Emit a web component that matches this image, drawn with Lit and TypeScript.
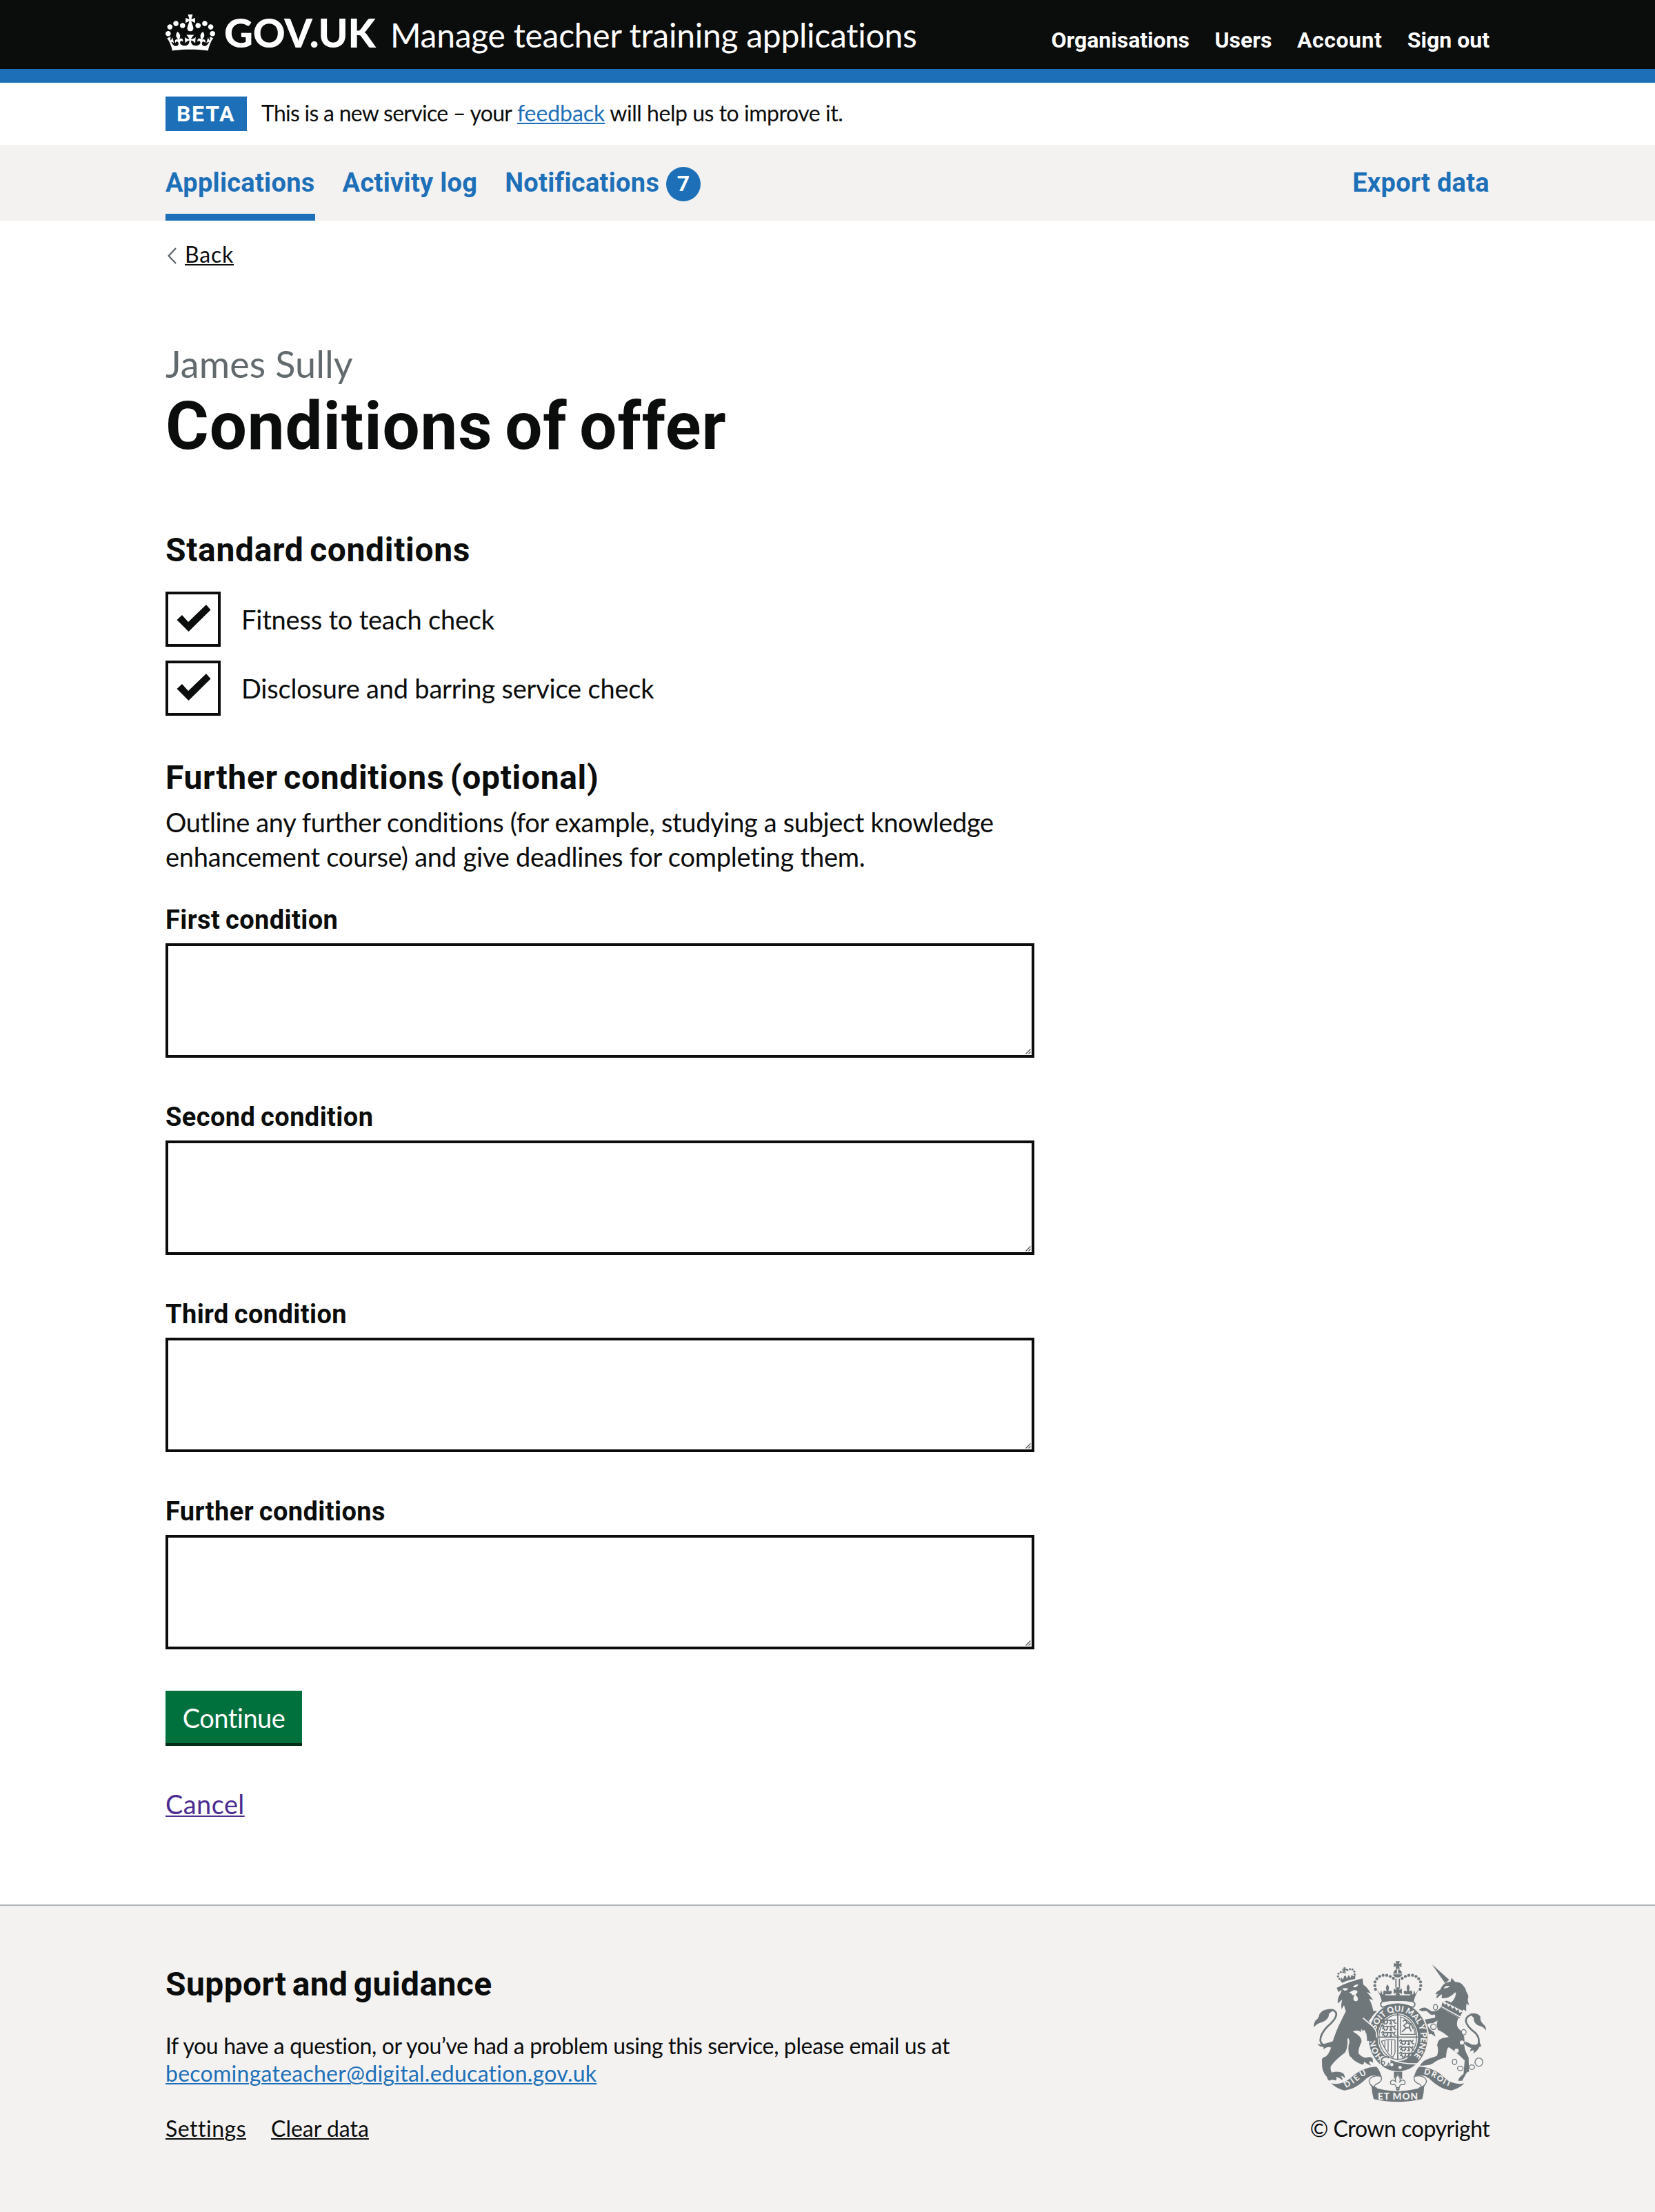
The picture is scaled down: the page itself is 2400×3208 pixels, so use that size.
import { LitElement, html, svg, css } from "lit";
import { customElement, property } from "lit/decorators.js";

const NAV_LINKS = [
  { text: "Organisations", cls: "organisations" },
  { text: "Users", cls: "users" },
  { text: "Account", cls: "account" },
  { text: "Sign out", cls: "sign-out" },
];

const STANDARD_CONDITIONS = ["Fitness to teach check", "Disclosure and barring service check"];

const FURTHER_CONDITIONS = ["First condition", "Second condition", "Third condition", "Further conditions"];

@customElement("gov-crown")
class GovCrown extends LitElement {
  static styles = css`
    :host { display: block; width: 72px; height: 53px; }
    svg { display: block; width: 72px; height: 53px; fill: #fff; }
  `;
  render() {
    return html`<svg viewBox="0 0 132 97" aria-hidden="true"><path fill-rule="evenodd" d="M25 30.2c3.5 1.5 7.7-.2 9.1-3.7 1.5-3.6-.2-7.8-3.9-9.2-3.6-1.4-7.6.3-9.1 3.9-1.4 3.5.3 7.5 3.9 9zM9 39.5c3.6 1.5 7.8-.2 9.2-3.7 1.5-3.6-.2-7.8-3.9-9.1-3.6-1.5-7.6.2-9.1 3.8-1.4 3.5.3 7.5 3.8 9zM4.4 57.2c3.5 1.5 7.7-.2 9.1-3.8 1.5-3.6-.2-7.7-3.9-9.1-3.5-1.5-7.6.3-9.1 3.8-1.4 3.5.3 7.6 3.9 9.1zm38.3-21.4c3.5 1.5 7.7-.2 9.1-3.8 1.5-3.6-.2-7.7-3.9-9.1-3.6-1.5-7.6.3-9.1 3.8-1.3 3.6.4 7.7 3.9 9.1zm64.4-5.6c-3.6 1.5-7.8-.2-9.1-3.7-1.5-3.6.2-7.8 3.8-9.2 3.6-1.4 7.7.3 9.2 3.9 1.3 3.5-.4 7.5-3.9 9zm15.9 9.3c-3.6 1.5-7.7-.2-9.1-3.7-1.5-3.6.2-7.8 3.7-9.1 3.6-1.5 7.7.2 9.2 3.8 1.5 3.5-.3 7.5-3.8 9zm4.7 17.7c-3.6 1.5-7.8-.2-9.2-3.8-1.5-3.6.2-7.7 3.9-9.1 3.6-1.5 7.7.3 9.2 3.8 1.3 3.5-.4 7.6-3.9 9.1zM89.3 35.8c-3.6 1.5-7.8-.2-9.2-3.8-1.4-3.6.2-7.7 3.9-9.1 3.6-1.5 7.7.3 9.2 3.8 1.4 3.6-.3 7.7-3.9 9.1zM69.7 17.7l8.9 4.7V9.3l-8.9 2.8c-.2-.3-.5-.6-.9-.9L72.4 0H59.6l3.5 11.2c-.3.3-.6.5-.9.9l-8.8-2.8v13.1l8.8-4.7c.3.3.6.7.9.9l-5 15.4v.1c-.2.8-.4 1.6-.4 2.4 0 4.1 3.1 7.5 7 8.1h.2c.3 0 .7.1 1 .1.4 0 .7 0 1-.1h.2c4-.6 7.1-4.1 7.1-8.1 0-.8-.1-1.7-.4-2.4V34l-5.1-15.4c.4-.2.7-.6 1-.9zM66 92.8c16.9 0 32.8 1.1 47.1 3.2 4-16.9 8.9-26.7 14-33.5l-9.6-3.4c1 4.9 1.1 7.2 0 10.2-1.5-1.4-3-4.3-4.2-8.7L108.6 76c2.8-2 5-3.2 7.5-3.3-4.4 9.4-10 11.9-13.6 11.2-4.3-.8-6.3-4.6-5.6-7.9 1-4.7 5.7-5.9 8-.5 4.3-8.7-3-11.4-7.6-8.8 7.1-7.2 7.9-13.5 2.1-21.1-8 6.1-8.1 12.3-4.5 20.8-4.7-5.4-12.1-2.5-9.5 6.2 3.4-5.2 7.9-2 7.2 3.1-.6 4.3-6.4 7.8-13.5 7.2-10.3-.9-10.9-8-11.2-13.8 2.5-.5 7.1 1.8 11 7.3L80.2 60c-4.1 4.4-8 5.3-12.3 5.4 1.4-4.4 8-11.6 8-11.6H55.5s6.4 7.2 7.9 11.6c-4.2-.1-8-1-12.3-5.4l1.4 16.4c3.9-5.5 8.5-7.7 10.9-7.3-.3 5.8-.9 12.8-11.1 13.8-7.2.6-12.9-2.9-13.5-7.2-.7-5 3.8-8.3 7.1-3.1 2.7-8.7-4.6-11.6-9.4-6.2 3.7-8.5 3.6-14.7-4.6-20.8-5.8 7.6-5 13.9 2.2 21.1-4.7-2.6-11.9.1-7.7 8.8 2.3-5.5 7.1-4.2 8.1.5.7 3.3-1.3 7.1-5.7 7.9-3.5.7-9-1.8-13.5-11.2 2.5.1 4.7 1.3 7.5 3.3l-4.7-15.4c-1.2 4.4-2.7 7.2-4.3 8.7-1.1-3-.9-5.3 0-10.2l-9.5 3.4c5 6.9 9.9 16.7 14 33.5 14.8-2.1 30.8-3.2 47.7-3.2z"/></svg>`;
  }
}

/** Pearls of the left arch of the main crown; the right arch mirrors them about x = 438. */
const PEARLS = [
  [341, 194], [338, 178], [339, 162], [347, 148], [359, 138], [374, 133], [390, 133], [405, 138], [419, 146],
];

const LION_PEARLS = [
  [184, 148], [178, 138], [180, 126], [190, 119], [201, 119], [219, 110], [230, 106], [241, 108], [249, 117], [250, 129],
];

const CHAIN = [
  [602, 272, 9, 12], [593, 357, 12, 12], [725, 381, 10, 12], [685, 510, 10, 12],
  [710, 538, 12, 10], [760, 533, 12, 10], [791, 511, 17, 18],
];

@customElement("royal-arms")
class RoyalArms extends LitElement {
  static styles = css`
    :host { display: block; width: 250px; height: 205px; }
    svg { display: block; width: 250px; height: 205px; overflow: visible; }
    .ink { fill: #6f777b; stroke: none; }
    .paper { fill: #f3f2f1; stroke: none; }
    .line { fill: none; stroke: #6f777b; stroke-width: 4; stroke-linecap: round; stroke-linejoin: round; }
    .medium { stroke-width: 5.5; }
    .heavy { stroke-width: 8; }
    .cut { fill: none; stroke: #f3f2f1; stroke-width: 5; stroke-linecap: round; stroke-linejoin: round; }
    .motto { fill: #f3f2f1; font-family: Lato, sans-serif; font-weight: 900; }
  `;

  /** Half of the ribbon; used as drawn on the left and mirrored on the right. */
  private ribbonHalf() {
    return svg`
      <path class="ink" d="M148 603Q195 614 235 578Q282 534 345 531Q360 546 367 574Q332 560 302 582Q252 631 205 634Q174 628 148 603Z"/>
      <path class="line" d="M366 573Q322 564 313 592Q314 614 346 624M366 574Q373 596 345 606Q334 612 336 622"/>
      <path class="ink" d="M312 596Q318 612 345 622L338 634Q322 622 312 596Z"/>
    `;
  }

  private crownHalf() {
    return svg`
      ${PEARLS.map(([x, y]) => svg`<circle class="ink" cx=${x} cy=${y} r="6.5"/>`)}
      <path class="ink" d="M393 172Q402 184 399 192Q396 199 399 204Q408 196 412 204Q414 212 406 216H380Q372 210 376 202Q382 196 388 204Q390 198 387 192Q384 184 393 172Z"/>
      <path class="ink" d="M344 192L362 214L366 198L372 218L380 208L384 220H438V246Q395 246 368 246Q364 220 344 192Z"/>
    `;
  }

  /** Three walking lions, as in the first and fourth quarters. */
  private passantLions() {
    return svg`${[0, 27, 54].map(
      (y) => svg`<path class="line medium" transform=${`translate(0 ${y})`} d="M0 4L6 0L10 6L24 4Q34 6 44 3L54 8L58 2M10 6L4 14L12 16L14 22M24 6L26 14L20 20M38 6L42 14L36 20L44 21M52 8L56 16L62 18"/>`,
    )}`;
  }

  render() {
    return html`<svg viewBox="72 71 750 615" role="img" aria-label="Royal coat of arms">
      <!-- lion -->
      <path class="line heavy" d="M152 434Q104 446 101 416Q101 388 132 356Q174 320 170 298Q162 276 124 288"/>
      <path class="ink" d="M150 283Q112 276 97 303Q94 321 80 330Q72 342 72 360Q84 344 108 337Q138 328 139 300L152 290Z"/>
      <path class="ink" d="M88 430Q108 440 122 430L158 420L148 448Q130 440 114 456Q118 446 110 444Q96 444 88 430Z"/>
      <path class="ink" d="M194 196L180 206L172 188Q228 158 285 147L288 174Q306 186 321 213L303 206Q318 222 331 241L313 235Q328 262 331 288L348 289Q332 302 320 322L311 332Q345 362 347 400L344 428L334 414L327 428L318 416L305 420Q302 396 312 386L298 384L294 368L285 376L279 366L278 380Q262 368 242 378Q284 400 280 424Q266 450 267 472Q280 490 300 492Q318 484 328 494L331 514Q320 504 312 510L322 526Q304 520 290 508Q294 516 284 522Q244 506 236 490L228 484Q218 452 228 422Q222 396 219 412Q222 446 208 470Q166 500 146 530Q144 548 152 556Q176 548 198 558Q208 566 208 580Q200 570 190 572Q200 580 196 590Q182 576 168 576Q176 584 168 591Q150 584 142 592Q132 590 130 576Q106 552 108 508Q104 492 126 486Q146 466 152 430Q170 372 190 334Q204 306 212 290L204 263L193 281Q190 258 196 238L177 256Q174 232 190 210Z"/>
      <path class="paper" d="M196 192Q206 186 222 190Q218 200 206 200ZM242 182Q254 172 266 172Q264 184 248 186ZM226 208L246 198Q262 196 263 206Q258 214 254 218Q270 232 262 244Q250 250 245 238Q244 226 250 218Q236 222 236 212Z"/>
      ${LION_PEARLS.map(([x, y]) => svg`<circle class="ink" cx=${x} cy=${y} r="4.5"/>`)}
      <path class="ink" d="M197 102L204 106L202 99L211 98L209 105L216 104L217 112L209 111L212 124L206 126L204 112L197 114Z"/>
      <path class="ink" d="M182 148L190 156L192 142L200 152L204 138L212 134L216 148L224 132L232 144L238 130L244 138L254 132L252 150Q220 154 196 166Z"/>
      <path class="cut" d="M198 170Q222 158 252 153"/>

      <!-- unicorn -->
      <path class="ink" d="M587 86L662 153L644 168Z"/>
      <path class="ink" d="M668 160L672 144L687 162Q714 162 724 180Q734 190 736 204Q750 224 742 240L748 264L737 256Q734 276 736 290L724 282L716 292L690 284Q664 276 632 250L648 244Q678 234 688 206Q660 238 628 232Q632 220 628 216L608 234L606 224L614 216L602 216Q604 204 622 196Q632 176 644 168Q656 162 668 160Z"/>
      <path class="paper" d="M640 186Q650 176 664 180Q656 190 640 190ZM634 236Q668 236 691 206Q692 232 670 252Z"/>
      <path class="ink" d="M624 273L702 318Q690 346 700 362Q730 388 728 418Q722 450 746 490L748 552L738 556L718 592H700Q704 576 724 562L729 504Q692 466 660 446Q650 448 648 490Q612 498 592 516Q576 526 546 526H534Q548 502 572 496L608 484Q618 462 609 436Q612 406 646 404L660 402Q636 380 612 370Q604 344 612 330L590 342Q572 340 566 346Q572 368 596 380L602 400L584 388L570 390L572 380Q552 366 550 340Q548 326 566 324L600 318Q604 300 592 304Q582 310 572 296L562 288L546 290L530 284Q542 272 560 274L586 290Q612 292 624 273Z"/>
      <path class="paper" d="M632 243L728 292L712 324L620 272Z"/>
      <path class="ink" d="M633 249L643 262L650 255L657 270L667 263L675 279L685 271L692 288L702 280L706 296L719 292L710 312L628 267Z"/>
      <path class="line" d="M626 273L707 318"/>
      ${CHAIN.map(([x, y, rx, ry]) => svg`<ellipse class="line" cx=${x} cy=${y} rx=${rx} ry=${ry}/>`)}
      <circle class="paper" cx="717" cy="426" r="9"/><circle class="paper" cx="694" cy="461" r="9"/>
      <circle class="paper" cx="725" cy="381" r="8"/>
      <path class="line heavy" d="M730 428Q760 458 788 436Q798 408 776 384Q738 356 734 332Q736 306 770 302"/>
      <path class="ink" d="M750 301Q784 294 797 312Q796 334 810 346Q824 356 821 374Q812 358 796 354Q768 348 768 318Z"/>
      <path class="ink" d="M732 420Q748 450 758 448L750 466Q764 456 770 462L766 474Q784 464 794 444L802 442L794 424Q776 444 752 430Z"/>

      <!-- shield and garter -->
      <ellipse class="paper" cx="439" cy="403" rx="134" ry="152"/>
      <ellipse class="ink" cx="439" cy="403" rx="128" ry="148"/>
      <ellipse class="paper" cx="438" cy="403" rx="88" ry="104"/>
      <ellipse class="line" cx="438" cy="402" rx="82" ry="97"/>
      <path class="line medium" d="M438 300V500M352 402H524"/>
      <g transform="translate(368 324)">${this.passantLions()}</g>
      <g transform="translate(446 414)">${this.passantLions()}</g>
      <path class="line" d="M450 314V390H514Q508 336 450 314"/>
      <path class="line medium" d="M462 332L472 326L478 338L492 346L488 360L496 376M478 340L464 352L474 362L458 378M476 362L490 360M496 344L504 364"/>
      <path class="line" d="M366 420Q396 410 426 414V470L416 490Q396 484 366 420M382 420V446M396 418V464M410 418V478"/>
      <path id="garter" fill="none" d="M439 515A99 112 0 0 1 439 291A99 112 0 0 1 439 515"/>
      <text class="motto" font-size="36"><textPath href="#garter" startOffset="70" textLength="516">HON<tspan dx="44">SOIT</tspan> QUI MAL Y PENSE</textPath></text>
      <path class="cut" d="M392 492Q450 522 532 518"/>
      <circle class="paper" cx="383" cy="508" r="24"/>
      <path class="line medium" d="M398 492Q380 482 368 498Q360 522 380 530Q396 530 398 516"/>
      <circle class="line" cx="374" cy="514" r="7"/>
      <circle class="paper" cx="412" cy="522" r="7"/><circle class="paper" cx="448" cy="534" r="7"/>

      <!-- the lion's arm lies over the garter -->
      <path class="ink" d="M262 310L290 322L330 360Q342 378 341 398L346 424L336 414L330 428L320 416L306 420Q302 396 300 376L262 352Z"/>
      <path class="cut" d="M288 320L332 358Q348 376 346 402"/>

      <!-- main crown -->
      ${this.crownHalf()}
      <g transform="translate(876 0) scale(-1 1)">${this.crownHalf()}</g>
      <path class="ink" d="M428 72H447L443 84L454 79V98L443 93L447 104H428L432 93L421 98V79L432 84Z"/>
      <path class="ink" d="M437 104Q454 110 457 126H418Q421 110 437 104ZM417 129H458Q454 142 437 143Q421 142 417 129Z"/>
      <path class="cut" d="M437 108V124"/>
      <path class="line medium" d="M430 150V182M445 150V182"/>
      <path class="ink" d="M427 186H449L443 198L456 190V214L443 208L449 220H427L433 208L420 214V190L433 198Z"/>
      <path class="line medium" d="M370 248Q438 234 506 248Q520 262 504 272Q438 246 372 272Q356 262 370 248Z"/>
      <path class="paper" d="M374 251Q438 239 502 251Q512 260 502 267Q438 243 374 267Q364 260 374 251Z"/>

      <!-- ribbon -->
      ${this.ribbonHalf()}
      <g transform="translate(876 0) scale(-1 1)">${this.ribbonHalf()}</g>
      <path class="ink" d="M324 618Q436 656 552 618Q552 650 544 672Q438 696 333 672Q326 648 324 618Z"/>
      <text class="motto" font-size="41" x="351" y="675" textLength="174">ET MON</text>
      <path id="dieu" fill="none" d="M213 624Q252 602 276 580Q296 566 318 560"/>
      <text class="motto" font-size="35"><textPath href="#dieu" textLength="108">DIEU</textPath></text>
      <path id="droit" fill="none" d="M550 563Q590 570 612 590Q636 608 674 621"/>
      <text class="motto" font-size="35"><textPath href="#droit" textLength="128">DROIT</textPath></text>
      <path class="ink" d="M421 553H457V584H421Z"/>
      <path class="paper" d="M438 562L454 584V600H422V584Z"/>
      <path class="line" d="M438 566Q454 582 446 598Q462 580 470 598Q470 612 458 608Q446 608 447 616L438 632L429 616Q430 608 418 608Q406 612 406 598Q414 580 430 598Q422 582 438 566Z"/>
      <circle class="line" cx="438" cy="627" r="6"/>
    </svg>`;
  }
}

@customElement("condition-field")
class ConditionField extends LitElement {
  @property() label = "";
  static styles = css`
    :host { display: block; }
    label { display: block; font: 700 38px/50px Roboto, sans-serif; letter-spacing: 0.4px; word-spacing: -2px; color: #0b0c0c; margin-bottom: 9px; }
    .box { position: relative; height: 166px; }
    textarea { display: block; box-sizing: border-box; width: 100%; height: 166px; margin: 0; border: 4px solid #0b0c0c; border-radius: 0; padding: 10px; resize: none; background: #fff; font: 38px/50px Lato, sans-serif; outline: none; }
    .grip { position: absolute; right: 5px; bottom: 5px; width: 8px; height: 8px; stroke: #555; stroke-width: 1.4; }
  `;
  render() {
    return html`<label for="field">${this.label}</label>
      <div class="box">
        <textarea id="field"></textarea>
        <svg class="grip" viewBox="0 0 8 8"><path d="M0.5 7.5L7.5 0.5M4.5 7.5L7.5 4.5"/></svg>
      </div>`;
  }
}

@customElement("app-root")
class AppRoot extends LitElement {
  static styles = css`
    :host { display: block; min-height: 3208px; background: #fff; color: #0b0c0c; font-family: Lato, sans-serif; font-size: 32px; line-height: 40px; }
    * { box-sizing: border-box; }
    h1, h2, p { margin: 0; }
    a { color: #1d70b8; text-decoration: underline; text-decoration-thickness: 2px; text-underline-offset: 2px; }
    .bold { font-family: Roboto, sans-serif; font-weight: 700; }
    .width { width: 1920px; margin: 0 auto; }

    .header { height: 120px; background: #0b0c0c; border-bottom: 20px solid #1d70b8; color: #fff; }
    .header .width { display: flex; align-items: baseline; padding-top: 17px; white-space: nowrap; }
    .header a { color: #fff; text-decoration: none; }
    gov-crown { align-self: flex-start; margin: 4px 13px 0 0; }
    .logotype { width: 241px; font-size: 58px; line-height: 60px; font-weight: 900; letter-spacing: -0.2px; }
    .service { font-size: 48px; line-height: 60px; letter-spacing: -0.27px; }
    .account-nav { display: flex; gap: 36.5px; margin-left: auto; }
    .account { letter-spacing: 0.54px; }

    .phase { display: flex; align-items: baseline; height: 90px; padding-top: 20px; }
    .tag { width: 118px; height: 50px; padding-left: 16px; background: #1d70b8; color: #fff; line-height: 51px; letter-spacing: 1.7px; }
    .phase p { margin-left: 21px; letter-spacing: -0.47px; }
    .phase .lead { letter-spacing: -0.73px; }
    .phase a { letter-spacing: -0.05px; }

    .primary { background: #f3f2f1; }
    .primary .width { display: flex; gap: 40px; height: 110px; font-size: 38px; line-height: 111px; letter-spacing: 0.29px; }
    .primary a { height: 110px; text-decoration: none; }
    .primary .current { box-shadow: inset 0 -10px #1d70b8; }
    .primary .with-badge { display: flex; }
    .badge { width: 50px; height: 50px; margin: 32px 0 0 10px; border-radius: 50%; background: #1d70b8; color: #fff; font-size: 32px; line-height: 48px; text-align: center; }
    .export { margin-left: auto; }

    .back { display: flex; align-items: center; gap: 12px; padding: 29px 0 109px 3px; }
    .back svg { width: 13px; height: 24px; margin-top: 3px; fill: none; stroke: #505a5f; stroke-width: 2; }
    .back a { letter-spacing: 0.79px; }
    .back a, .meta a { color: #0b0c0c; }
    .caption { display: block; font-size: 54px; line-height: 60px; letter-spacing: 0.08px; color: #626a6e; }
    h1 { margin-top: 10px; font-size: 96px; line-height: 100px; letter-spacing: 0.9px; word-spacing: -7px; }
    h2 { font-size: 48px; line-height: 60px; letter-spacing: 0.66px; word-spacing: -4px; }
    .standard { margin: 100px 0 30px; }
    .checks { display: flex; flex-direction: column; gap: 20px; }
    .check { display: flex; height: 80px; font-size: 38px; line-height: 80px; letter-spacing: -0.2px; }
    .check .box { width: 80px; height: 80px; margin-right: 30px; border: 4px solid #0b0c0c; }
    .check svg { display: block; width: 72px; height: 72px; }
    .further { margin: 60px 0 9px; }
    .hint { font-size: 38px; line-height: 50px; letter-spacing: -0.35px; }
    .hint span { display: block; white-space: nowrap; }
    .hint .second { letter-spacing: -0.23px; }
    .fields { display: flex; flex-direction: column; gap: 61px; width: 1260px; margin: 42px 0 60px; }
    .continue { display: block; width: 198px; height: 80px; padding: 2px 0 0; border: 0; border-bottom: 4px solid #002d18; background: #00703c; color: #fff; font: 38px/74px Lato, sans-serif; letter-spacing: -0.5px; text-align: center; }
    .cancel { padding: 59px 0 121px; font-size: 38px; line-height: 50px; }
    .cancel a { color: #4c2c92; letter-spacing: 0.4px; }

    .footer { height: 446px; border-top: 2px solid #b1b4b6; background: #f3f2f1; }
    .footer .width { display: flex; justify-content: space-between; padding-top: 80px; }
    .support { padding-top: 4px; }
    .support h2 { margin-bottom: 39px; letter-spacing: 0.4px; }
    .support p { letter-spacing: -0.37px; }
    .support p a { letter-spacing: 0.26px; }
    .meta { display: flex; gap: 36px; margin-top: 40px; }
    .meta .settings { letter-spacing: 0.5px; }
    .copyright { display: flex; flex-direction: column; align-items: center; width: 260px; white-space: nowrap; letter-spacing: -0.45px; }
    royal-arms { margin-bottom: 18px; letter-spacing: 0; }
  `;

  render() {
    return html`
      <header class="header">
        <div class="width">
          <gov-crown></gov-crown>
          <span class="logotype">GOV.UK</span>
          <span class="service">Manage teacher training applications</span>
          <nav class="account-nav bold">
            ${NAV_LINKS.map((l) => html`<a class=${l.cls}>${l.text}</a>`)}
          </nav>
        </div>
      </header>

      <div class="phase width">
        <strong class="tag bold">BETA</strong>
        <p><span class="lead">This is a new service – your</span> <a href="#">feedback</a> will help us to improve it.</p>
      </div>

      <nav class="primary">
        <div class="width bold">
          <a class="current" href="#">Applications</a>
          <a href="#">Activity log</a>
          <a class="with-badge" href="#">Notifications<span class="badge">7</span></a>
          <a class="export" href="#">Export data</a>
        </div>
      </nav>

      <main class="width">
        <div class="back">
          <svg viewBox="0 0 13 24"><path d="M12 1L1.5 12L12 23"/></svg>
          <a href="#">Back</a>
        </div>
        <span class="caption">James Sully</span>
        <h1 class="bold">Conditions of offer</h1>

        <h2 class="standard bold">Standard conditions</h2>
        <div class="checks">
          ${STANDARD_CONDITIONS.map(
            (text) => html`<div class="check">
              <span class="box"><svg viewBox="0 0 72 72"><path fill="#0b0c0c" d="M12.5 37L20 30L29 40L55 15L61.5 22.5L29.5 54Z"/></svg></span>
              <span>${text}</span>
            </div>`,
          )}
        </div>

        <h2 class="further bold">Further conditions (optional)</h2>
        <p class="hint">
          <span>Outline any further conditions (for example, studying a subject knowledge</span>
          <span class="second">enhancement course) and give deadlines for completing them.</span>
        </p>
        <div class="fields">
          ${FURTHER_CONDITIONS.map((label) => html`<condition-field label=${label}></condition-field>`)}
        </div>
        <button class="continue">Continue</button>
        <div class="cancel"><a href="#">Cancel</a></div>
      </main>

      <footer class="footer">
        <div class="width">
          <div class="support">
            <h2 class="bold">Support and guidance</h2>
            <p>If you have a question, or you’ve had a problem using this service, please email us at<br /><a href="#">becomingateacher@digital.education.gov.uk</a></p>
            <div class="meta"><a class="settings" href="#">Settings</a><a href="#">Clear data</a></div>
          </div>
          <div class="copyright">
            <royal-arms></royal-arms>
            <span>© Crown copyright</span>
          </div>
        </div>
      </footer>
    `;
  }
}
